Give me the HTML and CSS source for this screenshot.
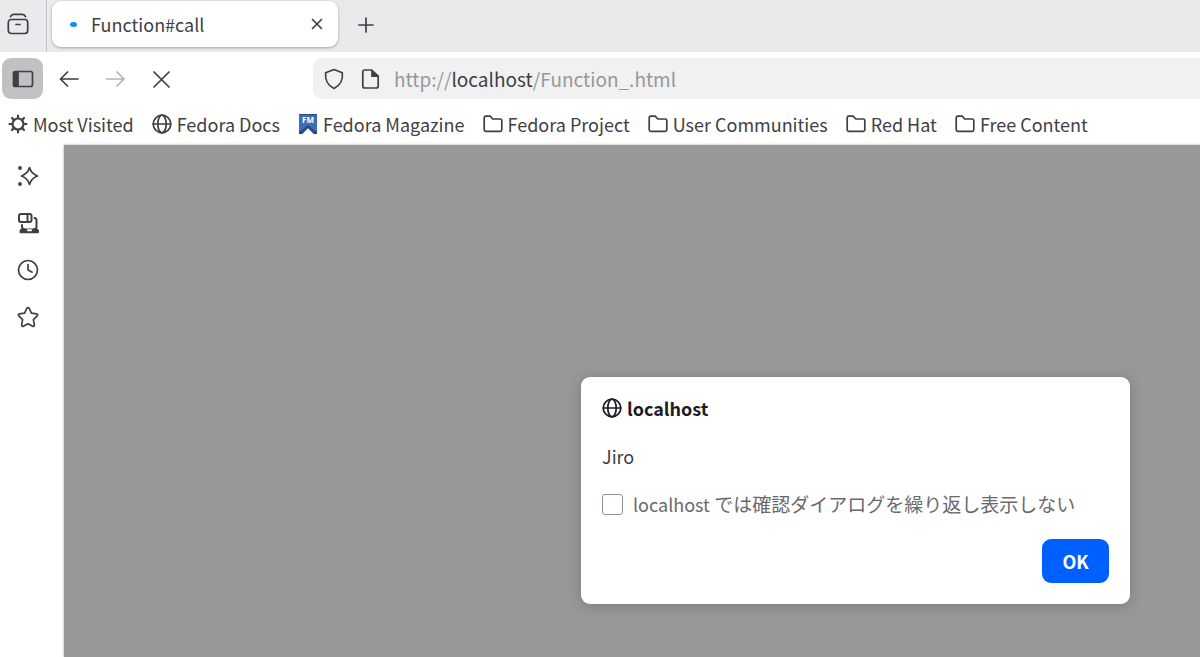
FILE: index.html
```html
<!DOCTYPE html>
<html lang="ja">
<head>
  <meta charset="UTF-8">
  <title>Function#call</title>
  <link rel="stylesheet" href="styles.css">
</head>
<body>
  <header class="tab-bar">
    <button class="icon-button recent" aria-label="Recent browsing">
      <svg class="icon" viewBox="0 0 22 22"><rect x="1.3" y="6.500" width="19.4" height="14" rx="3"/><path d="M3.5 3.600C4.200 2 5 1.300 6.500 1.300h9c1.500 0 2.300.7 3 2.300M9 11.500h4"/></svg>
    </button>
    <div class="tab">
      <span class="loading"></span>
      <span class="tab-title">Function#call</span>
      <button class="icon-button tab-close" aria-label="Close tab">
        <svg class="icon" viewBox="0 0 20 20"><path d="M5.500 5.500l9 9M14.500 5.500l-9 9"/></svg>
      </button>
    </div>
    <button class="icon-button new-tab" aria-label="New tab">
      <svg class="icon" viewBox="0 0 20 20"><path d="M10 3v14M3 10h14"/></svg>
    </button>
  </header>

  <nav class="nav-bar">
    <button class="icon-button sidebar-toggle" aria-label="Sidebar">
      <svg class="icon" viewBox="0 0 22 22"><rect x="1.500" y="3.500" width="19" height="15" rx="2"/><path class="fill" d="M2 4h4v14H2z"/></svg>
    </button>
    <button class="icon-button" aria-label="Back">
      <svg class="icon" viewBox="0 0 20 20"><path d="M19 10H1.500M8.500 3L1.500 10l7 7"/></svg>
    </button>
    <button class="icon-button" aria-label="Forward" disabled>
      <svg class="icon" viewBox="0 0 20 20"><path d="M1.500 10H19M12 3l7 7-7 7"/></svg>
    </button>
    <button class="icon-button" aria-label="Stop">
      <svg class="icon" viewBox="0 0 20 20"><path d="M3 3l15 15M18 3L3 18"/></svg>
    </button>
    <a class="url-bar" href="#">
      <svg class="icon" viewBox="0 0 20 22"><path d="M10 1.500L18.300 4.800C19.200 11.500 16 17.500 10 20.500 4 17.500.8 11.500 1.700 4.800z"/></svg>
      <svg class="icon" viewBox="0 0 20 22"><path d="M11.500 2H4.800c-1.300 0-2 .7-2 2v14c0 1.300.7 2 2 2h11.400c1.300 0 2-.7 2-2V8.200z"/><path class="fill" d="M12 2.500l5.700 5.700H12z"/></svg>
      <span class="url">http://<strong>localhost</strong>/Function_.html</span>
    </a>
  </nav>

  <nav class="bookmarks">
    <a href="#">
      <svg class="icon gear" viewBox="0 0 20 20"><circle cx="10" cy="10" r="5.500"/><path d="M10 1.500v2M10 16.500v2M1.500 10h2M16.500 10h2M4 4l1.500 1.500M14.500 14.500L16 16M4 16l1.500-1.500M14.500 5.500L16 4"/></svg>
      Most Visited
    </a>
    <a href="#">
      <svg class="icon" viewBox="0 0 20 20"><circle cx="10" cy="10" r="8.800"/><ellipse cx="10" cy="10" rx="4.200" ry="8.800"/><path d="M1.200 10h17.600"/></svg>
      Fedora Docs
    </a>
    <a href="#">
      <svg class="icon ribbon" viewBox="0 0 20 22"><path class="ribbon-back" d="M1 1h18v20h-3l-6-6-6 6H1z"/><path class="ribbon-fold" d="M1 18l3-1 6-5 6 5 3 1v3h-3l-6-6-6 6H1zM1 1h18v1H1z"/><text x="10" y="10" text-anchor="middle">FM</text></svg>
      Fedora Magazine
    </a>
    <a href="#">
      <svg class="icon" viewBox="0 0 20 20"><path d="M1.200 15.800V3.800c0-1 .6-1.600 1.600-1.600h4.400L9.800 5h7.400c1 0 1.600.6 1.600 1.600v9.200c0 1-.6 1.600-1.600 1.600H2.800c-1 0-1.600-.6-1.600-1.600z"/></svg>
      Fedora Project
    </a>
    <a href="#">
      <svg class="icon" viewBox="0 0 20 20"><path d="M1.200 15.800V3.800c0-1 .6-1.600 1.600-1.600h4.400L9.800 5h7.400c1 0 1.600.6 1.600 1.600v9.200c0 1-.6 1.600-1.600 1.600H2.800c-1 0-1.600-.6-1.600-1.600z"/></svg>
      User Communities
    </a>
    <a href="#">
      <svg class="icon" viewBox="0 0 20 20"><path d="M1.200 15.800V3.800c0-1 .6-1.600 1.600-1.600h4.400L9.800 5h7.400c1 0 1.600.6 1.600 1.600v9.200c0 1-.6 1.600-1.600 1.600H2.800c-1 0-1.600-.6-1.600-1.600z"/></svg>
      Red Hat
    </a>
    <a href="#">
      <svg class="icon" viewBox="0 0 20 20"><path d="M1.200 15.800V3.800c0-1 .6-1.600 1.600-1.600h4.400L9.800 5h7.400c1 0 1.600.6 1.600 1.600v9.200c0 1-.6 1.600-1.600 1.600H2.800c-1 0-1.600-.6-1.600-1.600z"/></svg>
      Free Content
    </a>
  </nav>

  <div class="main">
    <aside class="sidebar">
      <button class="icon-button" aria-label="AI chatbot">
        <svg class="icon" viewBox="0 0 22 22"><path d="M12.500 2.500c1.200 4.500 3.500 6.800 8 8.500-4.500 1.700-6.800 4-8 8.500-1.200-4.500-3.500-6.800-8-8.500 4.500-1.700 6.800-4 8-8.500z"/><circle class="dot" cx="3" cy="3" r="1.900"/><circle class="dot" cx="3" cy="19" r="1.900"/></svg>
      </button>
      <button class="icon-button devices" aria-label="Synced tabs">
        <svg class="icon" viewBox="0 0 22 22"><rect x="2" y="2" width="12.500" height="8" rx="2"/><path d="M10.500 2v8M17.500 6c1.300.2 2 .8 2 2.200V15c0 1.300-.7 2-2 2M5 13v2c0 1.200.7 2 2 2"/><path class="fill" d="M5 17.500h14.500c1.200.3 1.700 1.300 1.500 2.700H3.500c-.2-1.400.3-2.400 1.500-2.700z"/><path class="slot" d="M11 18.300h3"/></svg>
      </button>
      <button class="icon-button" aria-label="History">
        <svg class="icon" viewBox="0 0 22 22"><circle cx="11" cy="11" r="9.500"/><path d="M11 5.500V11l4.200 2.200"/></svg>
      </button>
      <button class="icon-button" aria-label="Bookmarks">
        <svg class="icon" viewBox="0 0 22 22"><path d="M9.900 2.200c.5-.9 1.700-.9 2.200 0l2.300 4.900 5.200.7c1 .2 1.400 1.300.7 2l-3.900 3.800 1 5.500c.1 1-.8 1.700-1.700 1.200L11 17.700l-4.700 2.600c-.9.5-1.800-.2-1.700-1.200l1-5.500L1.700 9.800c-.7-.7-.3-1.800.7-2l5.200-.7z"/></svg>
      </button>
    </aside>
    <main class="page">
      <form class="dialog" role="dialog" aria-labelledby="origin">
        <h1 id="origin">
          <svg class="icon" viewBox="0 0 20 20"><circle cx="10" cy="10" r="8.800"/><ellipse cx="10" cy="10" rx="4.200" ry="8.800"/><path d="M1.200 10h17.600"/></svg>
          localhost
        </h1>
        <p>Jiro</p>
        <div class="suppress">
          <input type="checkbox" id="suppress">
          <label for="suppress"><span class="host">localhost</span> では確認ダイアログを繰り返し表示しない</label>
        </div>
        <button class="ok" type="button">OK</button>
      </form>
    </main>
  </div>
</body>
</html>
```

FILE: styles.css
```css
* {
  box-sizing: border-box;
}
body {
  margin: 0;
  min-height: 100vh;
  display: flex;
  flex-direction: column;
  overflow: hidden;
  background: #fff;
  color: #3f3f44;
  font-family: "Noto Sans CJK JP", "Noto Sans", sans-serif;
  font-size: 18px;
  line-height: 28px;
}
button, input {
  font: inherit;
  margin: 0;
}
a {
  color: inherit;
  text-decoration: none;
}
.icon {
  width: 20px;
  height: 20px;
  flex: none;
  fill: none;
  stroke: currentColor;
  stroke-width: 1.7;
  stroke-linecap: round;
  stroke-linejoin: round;
}
.icon .fill, .icon .dot {
  fill: currentColor;
}
.icon .dot {
  stroke: none;
}
.icon-button {
  display: flex;
  align-items: center;
  justify-content: center;
  width: 40px;
  height: 40px;
  padding: 0;
  border: none;
  border-radius: 9px;
  background: none;
  color: #3f3f44;
}
.icon-button:disabled {
  color: #b4b4b6;
}

/* tabs */
.tab-bar {
  display: flex;
  height: 52px;
  background: #eaeaec;
}
.recent {
  width: 47px;
  height: 52px;
  padding-right: 10px;
  padding-bottom: 4px;
  border-right: 1px solid #c4c4c8;
  border-radius: 0;
}
.recent .icon {
  width: 22px;
  height: 22px;
}
.tab {
  display: flex;
  align-items: center;
  width: 286px;
  height: 46px;
  margin: 1px 8px 0 5px;
  padding: 0 10px 0 18px;
  border-radius: 9px;
  background: #fff;
  box-shadow: 0 1px 3px rgba(0, 0, 0, 0.3);
}
.loading {
  width: 7px;
  height: 5px;
  border-radius: 50%;
  background: #1489ff;
}
.tab-title {
  flex: 1;
  margin-left: 14px;
}
.tab-close {
  width: 22px;
  height: 32px;
}
.new-tab {
  margin-top: 5px;
}

/* toolbar */
.nav-bar {
  display: flex;
  align-items: center;
  gap: 6px;
  height: 53px;
  padding-left: 2px;
}
.sidebar-toggle {
  width: 41px;
  height: 41px;
  background: #c1c1c3;
}
.sidebar-toggle .icon {
  width: 22px;
  height: 22px;
}
.url-bar {
  display: flex;
  align-items: center;
  flex: 1;
  gap: 16px;
  height: 41px;
  margin-left: 126px;
  padding-left: 11px;
  border-radius: 9px 0 0 9px;
  background: #f1f1f2;
}
.url-bar .icon {
  height: 22px;
}
.url {
  margin-left: -2px;
  color: #98989b;
  font-size: 19px;
}
.url strong {
  color: #3f3f44;
  font-weight: 400;
}

/* bookmarks */
.bookmarks {
  display: flex;
  align-items: center;
  gap: 18px;
  height: 40px;
  padding: 0 0 2px 8px;
  white-space: nowrap;
}
.bookmarks a {
  display: flex;
  align-items: center;
  gap: 5px;
}
.gear {
  stroke-width: 2.2;
}
.ribbon {
  height: 22px;
  stroke: none;
}
.ribbon-back {
  fill: #3d6eb4;
}
.ribbon-fold {
  fill: #294b83;
}
.ribbon text {
  fill: #fff;
  font: bold 8px "Noto Sans", sans-serif;
}

/* sidebar and page */
.main {
  display: flex;
  flex: 1;
}
.sidebar {
  display: flex;
  flex-direction: column;
  gap: 7px;
  width: 64px;
  padding: 11px 8px;
}
.sidebar .icon {
  width: 22px;
  height: 22px;
}
.devices .icon {
  stroke-width: 2;
}
.devices .slot {
  stroke: #fff;
}
.page {
  flex: 1;
  display: flex;
  justify-content: flex-end;
  align-items: flex-start;
  padding: 232px 70px 0 0;
  background: #98989a;
  box-shadow: 0 0 2px rgba(0, 0, 0, 0.4);
}
.dialog {
  display: flex;
  flex-direction: column;
  width: 549px;
  padding: 17px 21px 21px;
  border-radius: 9px;
  background: #fff;
  box-shadow: 0 2px 14px rgba(0, 0, 0, 0.2);
}
.dialog h1 {
  display: flex;
  align-items: center;
  gap: 5px;
  margin: 0;
  color: #1c1c22;
  font-size: 18px;
}
.dialog p {
  margin: 20px 0;
}
.suppress {
  display: flex;
  align-items: center;
  gap: 10px;
  color: #69696d;
  font-size: 19px;
}
.suppress .host {
  font-size: 18px;
}
.suppress input {
  appearance: none;
  width: 21px;
  height: 21px;
  border: 1px solid #8f8f9d;
  border-radius: 3px;
  background: #fff;
}
.ok {
  align-self: flex-end;
  width: 67px;
  height: 44px;
  margin-top: 21px;
  border: none;
  border-radius: 9px;
  background: #0060ff;
  color: #fff;
  font-weight: 700;
}
```
